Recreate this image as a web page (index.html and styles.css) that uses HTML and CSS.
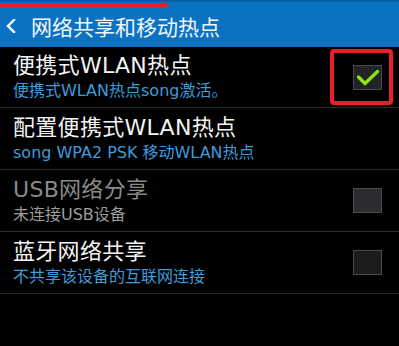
FILE: index.html
```html
<!DOCTYPE html>
<html lang="zh">
<head>
<meta charset="utf-8">
<link rel="stylesheet" href="styles.css">
</head>
<body>
<div class="screen">
  <header class="appbar">
    <div class="statusband"></div>
    <div class="progress"></div>
    <div class="titlebar">
      <svg class="back" width="12" height="14" viewBox="0 0 12 14"><polyline points="9,1 3,7 9,13" fill="none" stroke="#fff" stroke-width="2.4" stroke-linecap="square"/></svg>
      <span class="apptitle">网络共享和移动热点</span>
    </div>
  </header>
  <div class="list">
    <div class="row">
      <div class="texts">
        <div class="title">便携式WLAN热点</div>
        <div class="sub">便携式WLAN热点song激活。</div>
      </div>
      <div class="check checked">
        <svg width="29" height="25" viewBox="0 0 29 25"><polyline points="5.5,12 12,18.5 24.5,6.5" fill="none" stroke="#8fe11a" stroke-width="3.4" stroke-linecap="round" stroke-linejoin="round"/></svg>
      </div>
      <div class="highlight"></div>
    </div>
    <div class="row">
      <div class="texts">
        <div class="title">配置便携式WLAN热点</div>
        <div class="sub">song WPA2 PSK 移动WLAN热点</div>
      </div>
    </div>
    <div class="row disabled">
      <div class="texts">
        <div class="title">USB网络分享</div>
        <div class="sub">未连接USB设备</div>
      </div>
      <div class="check off-disabled"></div>
    </div>
    <div class="row">
      <div class="texts">
        <div class="title">蓝牙网络共享</div>
        <div class="sub">不共享该设备的互联网连接</div>
      </div>
      <div class="check"></div>
    </div>
  </div>
</div>
</body>
</html>
```
FILE: styles.css
```css
html, body {
  margin: 0;
  padding: 0;
  background: #000;
}
body {
  font-family: "DejaVu Sans", "Noto Sans CJK SC", sans-serif;
  width: 399px;
  height: 346px;
  overflow: hidden;
}
.screen {
  width: 399px;
  height: 346px;
  background: #000;
}
.appbar {
  position: relative;
  height: 47px;
  background: #0a72c3;
}
.statusband {
  height: 2px;
  background: #085ea4;
}
.progress {
  position: absolute;
  left: 0;
  top: 3px;
  width: 168px;
  height: 5px;
  background: #ea1f2b;
  border-radius: 0 3px 3px 0;
}
.titlebar {
  display: flex;
  align-items: center;
  height: 45px;
  padding-left: 5px;
  gap: 14px;
}
.back {
  display: block;
  margin-top: 2px;
}
.apptitle {
  color: #f4f6f8;
  font-size: 21px;
  line-height: 26px;
  margin-top: 2px;
  font-family: "Noto Sans CJK SC", sans-serif;
}
.list {
  display: flex;
  flex-direction: column;
}
.row {
  position: relative;
  box-sizing: border-box;
  height: 62px;
  border-bottom: 1px solid #2b2b2b;
  display: flex;
  align-items: center;
  justify-content: space-between;
  padding: 0 17px 0 13px;
}
.row:first-child {
  height: 61px;
}
.texts {
  display: flex;
  flex-direction: column;
  gap: 2px;
}
.title {
  color: #f3f3f3;
  font-size: 22px;
  line-height: 26px;
  letter-spacing: 0.3px;
}
.sub {
  color: #3e9cdc;
  font-size: 16px;
  line-height: 20px;
}
.disabled .title {
  color: #8a8a8a;
}
.disabled .sub {
  color: #9c9c9c;
}
.check {
  box-sizing: border-box;
  width: 29px;
  height: 25px;
  background: #1c1c1e;
  border: 1px solid #4a4a4a;
}
.check svg {
  display: block;
  margin: -1px;
}
.check.checked {
  background: #222325;
}
.check.off-disabled {
  background: #2b2c30;
}
.highlight {
  position: absolute;
  left: 330px;
  top: 2px;
  width: 63px;
  height: 56px;
  box-sizing: border-box;
  border: 4px solid #ea1f2b;
  border-radius: 4px;
}
```
